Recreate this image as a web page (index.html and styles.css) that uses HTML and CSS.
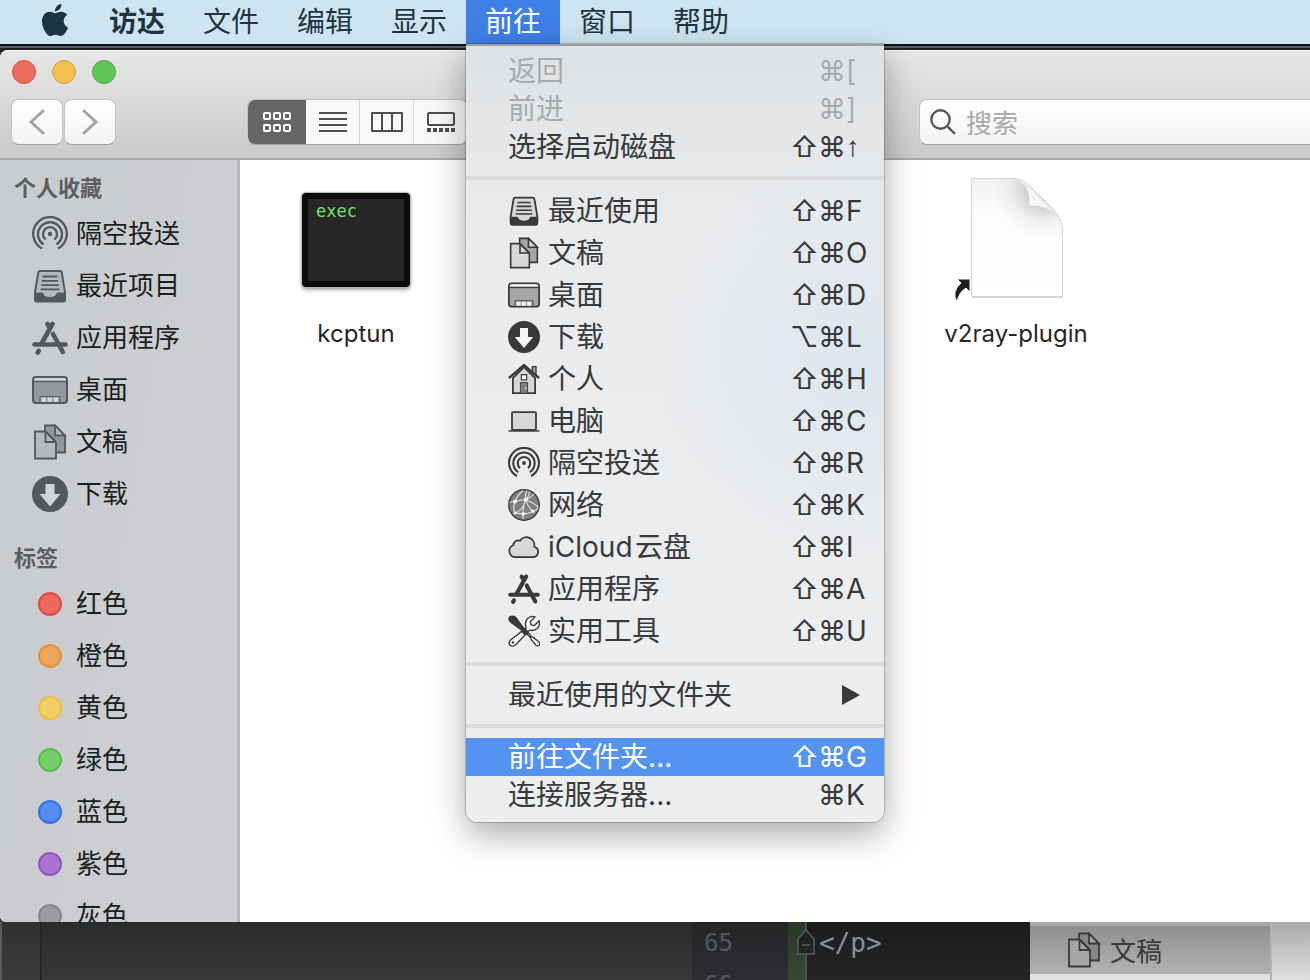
FILE: index.html
```html
<!DOCTYPE html>
<html lang="zh-CN">
<head>
<meta charset="utf-8">
<meta name="viewport" content="width=device-width, initial-scale=1">
<title>访达</title>
<link rel="stylesheet" href="styles.css">
</head>
<body>
<svg class="sprite" aria-hidden="true">
  <symbol id="i-airdrop" viewBox="0 0 36 36">
    <g fill="none" stroke="currentColor" stroke-width="2.300">
      <path d="M10 32.600A16.800 16.800 0 1 1 26 32.600"/>
      <path d="M11.600 28.400A12 12 0 1 1 24.400 28.400"/>
      <path d="M13.600 23.600A7 7 0 1 1 22.400 23.600"/>
    </g>
    <circle cx="18" cy="18" r="2.200" fill="currentColor"/>
  </symbol>
  <symbol id="i-tray" viewBox="0 0 36 36">
    <path d="M8 3h20q1.400 0 1.700 1.500L33 24v7.500q0 2-2 2H5q-2 0-2-2V24L6.300 4.500Q6.600 3 8 3z" class="pale" stroke="currentColor" stroke-width="2"/>
    <path d="M3 24.500h7q1.200 0 1.700 1.500 1 3 6.300 3t6.300-3q.5-1.500 1.700-1.500h7v7q0 2-2 2H5q-2 0-2-2z" fill="currentColor"/>
    <path d="M10.500 8.500h15M9.800 12.800h16.400M9.200 17.100h17.600M8.600 21.400h18.800" stroke="currentColor" stroke-width="1.800"/>
  </symbol>
  <symbol id="i-docs" viewBox="0 0 36 36">
    <path d="M13 1.500h10l10 10v17H13z" class="mid" stroke="currentColor" stroke-width="1.800"/>
    <path d="M23 1.500v10h10z" class="pale" stroke="currentColor" stroke-width="1.800"/>
    <path d="M3 7.500h10.500L24 18v16.500H3z" class="pale" stroke="currentColor" stroke-width="1.800"/>
    <path d="M13.500 7.500V18H24M13.500 7.500L24 18" fill="none" stroke="currentColor" stroke-width="1.800"/>
  </symbol>
  <symbol id="i-desktop" viewBox="0 0 36 36">
    <rect x="1" y="5" width="34" height="26" rx="3" class="mid" stroke="currentColor" stroke-width="2"/>
    <path d="M2 9V8q0-2 2-2h28q2 0 2 2v1z" class="light"/>
    <path d="M1 9.500h34" stroke="currentColor" stroke-width="1.600"/>
    <path d="M8 30v-5.500h20V30" fill="none" stroke="currentColor" stroke-width="1"/>
    <path d="M9.500 25.500h4.500V30H9.500zM15.500 25.500H20V30h-4.500zM21.500 25.500H26V30h-4.500z" class="light"/>
  </symbol>
  <symbol id="i-download" viewBox="0 0 36 36">
    <circle cx="18" cy="18" r="18" fill="currentColor"/>
    <path d="M13.500 8h9v10h6L18 30.500 7.500 18h6z" class="light"/>
  </symbol>
  <symbol id="i-apps" viewBox="0 0 36 36">
    <g fill="none" stroke="currentColor" stroke-width="4.600" stroke-linecap="round">
      <path d="M2.500 24.500h31"/>
      <path d="M20.500 4L9.800 23M6.700 30.800l-1 1.700"/>
      <path d="M15.300 4l1.500 2.500M21 14l9.800 18"/>
    </g>
  </symbol>
  <symbol id="i-home" viewBox="0 0 36 36">
    <path d="M27.500 4h4v10l-4-4z" class="mid" stroke="currentColor" stroke-width="1.500"/>
    <path d="M5.500 17L18 4.500 30.500 17v17h-25z" class="pale" stroke="currentColor" stroke-width="2"/>
    <path d="M1 17L18 2.500 35 17" fill="none" stroke="currentColor" stroke-width="2.800"/>
    <path d="M15 13h6v6h-6z" class="light" stroke="currentColor" stroke-width="1.300"/>
    <path d="M14 22h8v12h-8z" class="dark" stroke="currentColor" stroke-width="1"/>
    <path d="M20 27v3" stroke="#eee" stroke-width="1"/>
  </symbol>
  <symbol id="i-laptop" viewBox="0 0 36 36">
    <rect x="4.500" y="8" width="27" height="20" rx="1" class="pale" stroke="currentColor" stroke-width="2"/>
    <path d="M0 28.500h36q-.5 1.500-2 1.500H2q-1.500 0-2-1.500z" fill="currentColor"/>
  </symbol>
  <symbol id="i-network" viewBox="0 0 36 36">
    <circle cx="18" cy="18" r="17.200" class="dark" stroke="currentColor" stroke-width="1.400"/>
    <g fill="none" stroke="#e6e7e9" stroke-width="1.200">
      <path d="M2 15q3-1 6-1 6-2 12-2 5-2 9-6M8 14q-3 6 0 13l9 1q6 0 11-3 4-1 6-4M20 12q-4 8-3 22M21 2q-2 5-1 10 2 8 8 13M8 27q9-3 12-15M20 12q6 2 14 8M8 14q3-8 9-12M20 12q4-4 4-9"/>
    </g>
    <g fill="#f1f2f3"><circle cx="8" cy="14" r="2.200"/><circle cx="20" cy="12" r="2.300"/><circle cx="8" cy="27" r="1.800"/><circle cx="17" cy="28" r="2"/><circle cx="28" cy="25" r="2"/></g>
  </symbol>
  <symbol id="i-cloud" viewBox="0 0 36 36">
    <path d="M8 29.500a7 7 0 0 1-2-13.500 5.500 5.500 0 0 1 7.500-5 8.800 8.800 0 0 1 16 6.500A6.200 6.200 0 0 1 29 29.500z" class="pale" stroke="currentColor" stroke-width="2" stroke-linejoin="round"/>
  </symbol>
  <symbol id="i-tools" viewBox="0 0 36 36">
    <path d="M20.500 14.500q-2.500-6 1.500-10.500 4-3.500 8.500-2l-5.500 5.500 1 3.500 3.500 1L35 6.500q1.500 5-2 8.500-4 3.500-8.500 2L8 34q-3 2-5.500 0t0-5.500z" class="light" stroke="currentColor" stroke-width="1.500" stroke-linejoin="round"/>
    <circle cx="5.500" cy="31" r="1.400" fill="currentColor"/>
    <path d="M21 21l4 4 1.500 3 5 6q2 1.500 3.500 0t0-3.500l-6-5-3-1.500-3-4z" class="light" stroke="currentColor" stroke-width="1.500"/>
    <path d="M1 2q4-3 8 0l9 12 5 4q1 4-4 5-4-3-5-6L3 9Q-1 6 1 2z" fill="currentColor"/>
  </symbol>
</svg>

<header class="menubar">
  <button class="apple" aria-label="Apple">
    <svg viewBox="0 0 24 24" width="32" height="32"><path fill="currentColor" d="M12.152 6.896c-.948 0-2.415-1.078-3.960-1.040-2.040.027-3.910 1.183-4.961 3.014-2.117 3.675-.546 9.103 1.519 12.090 1.013 1.454 2.208 3.090 3.792 3.039 1.520-.065 2.090-.987 3.935-.987 1.831 0 2.350.987 3.960.948 1.637-.026 2.676-1.480 3.676-2.948 1.156-1.688 1.636-3.325 1.662-3.415-.039-.013-3.182-1.221-3.220-4.857-.026-3.040 2.480-4.494 2.597-4.559-1.429-2.090-3.623-2.324-4.390-2.376-2-.156-3.675 1.090-4.610 1.090zM15.530 3.830c.843-1.012 1.400-2.427 1.245-3.830-1.207.052-2.662.805-3.532 1.818-.780.896-1.454 2.338-1.273 3.714 1.338.104 2.715-.688 3.559-1.701"/></svg>
  </button>
  <button class="bar-item app-name">访达</button>
  <button class="bar-item">文件</button>
  <button class="bar-item">编辑</button>
  <button class="bar-item">显示</button>
  <div class="bar-menu">
    <button class="bar-item active" aria-expanded="true">前往</button>
    <div class="menu" role="menu">
      <button class="row" role="menuitem" disabled><span class="name">返回</span><span class="keys"><i>⌘</i><b>[</b></span></button>
      <button class="row" role="menuitem" disabled><span class="name">前进</span><span class="keys"><i>⌘</i><b>]</b></span></button>
      <button class="row" role="menuitem"><span class="name">选择启动磁盘</span><span class="keys"><i>⇧</i><i>⌘</i><b class="arrow">↑</b></span></button>
      <hr>
      <button class="row place" role="menuitem"><svg class="icon"><use href="#i-tray"/></svg><span class="name">最近使用</span><span class="keys"><i>⇧</i><i>⌘</i><b>F</b></span></button>
      <button class="row place" role="menuitem"><svg class="icon"><use href="#i-docs"/></svg><span class="name">文稿</span><span class="keys"><i>⇧</i><i>⌘</i><b>O</b></span></button>
      <button class="row place" role="menuitem"><svg class="icon"><use href="#i-desktop"/></svg><span class="name">桌面</span><span class="keys"><i>⇧</i><i>⌘</i><b>D</b></span></button>
      <button class="row place" role="menuitem"><svg class="icon"><use href="#i-download"/></svg><span class="name">下载</span><span class="keys"><i>⌥</i><i>⌘</i><b>L</b></span></button>
      <button class="row place" role="menuitem"><svg class="icon"><use href="#i-home"/></svg><span class="name">个人</span><span class="keys"><i>⇧</i><i>⌘</i><b>H</b></span></button>
      <button class="row place" role="menuitem"><svg class="icon"><use href="#i-laptop"/></svg><span class="name">电脑</span><span class="keys"><i>⇧</i><i>⌘</i><b>C</b></span></button>
      <button class="row place" role="menuitem"><svg class="icon"><use href="#i-airdrop"/></svg><span class="name">隔空投送</span><span class="keys"><i>⇧</i><i>⌘</i><b>R</b></span></button>
      <button class="row place" role="menuitem"><svg class="icon"><use href="#i-network"/></svg><span class="name">网络</span><span class="keys"><i>⇧</i><i>⌘</i><b>K</b></span></button>
      <button class="row place" role="menuitem"><svg class="icon"><use href="#i-cloud"/></svg><span class="name">iCloud&hairsp;云盘</span><span class="keys"><i>⇧</i><i>⌘</i><b>I</b></span></button>
      <button class="row place" role="menuitem"><svg class="icon"><use href="#i-apps"/></svg><span class="name">应用程序</span><span class="keys"><i>⇧</i><i>⌘</i><b>A</b></span></button>
      <button class="row place" role="menuitem"><svg class="icon"><use href="#i-tools"/></svg><span class="name">实用工具</span><span class="keys"><i>⇧</i><i>⌘</i><b>U</b></span></button>
      <hr>
      <button class="row" role="menuitem" aria-haspopup="true"><span class="name">最近使用的文件夹</span><svg class="submenu" viewBox="0 0 18 20" width="18" height="20"><path d="M0 0l18 10L0 20z" fill="currentColor"/></svg></button>
      <hr>
      <button class="row selected" role="menuitem"><span class="name">前往文件夹...</span><span class="keys"><i>⇧</i><i>⌘</i><b>G</b></span></button>
      <button class="row" role="menuitem"><span class="name">连接服务器...</span><span class="keys"><i>⌘</i><b>K</b></span></button>
    </div>
  </div>
  <button class="bar-item">窗口</button>
  <button class="bar-item">帮助</button>
</header>

<main class="finder">
  <div class="titlebar">
    <div class="lights">
      <button class="light-btn close" aria-label="关闭"></button>
      <button class="light-btn minimize" aria-label="最小化"></button>
      <button class="light-btn zoom" aria-label="缩放"></button>
    </div>
    <div class="tools">
      <div class="nav">
        <button class="nav-btn" aria-label="后退"><svg width="18" height="26" viewBox="0 0 18 26"><path d="M15 2L3 13l12 11"/></svg></button>
        <button class="nav-btn" aria-label="前进"><svg width="18" height="26" viewBox="0 0 18 26"><path d="M3 2l12 11L3 24"/></svg></button>
      </div>
      <div class="views">
        <button class="view on" aria-label="图标">
          <svg width="30" height="22" viewBox="0 0 30 22"><g fill="none" stroke="#fff" stroke-width="2"><rect x="2" y="2" width="6" height="6" rx="1"/><rect x="12" y="2" width="6" height="6" rx="1"/><rect x="22" y="2" width="6" height="6" rx="1"/><rect x="2" y="14" width="6" height="6" rx="1"/><rect x="12" y="14" width="6" height="6" rx="1"/><rect x="22" y="14" width="6" height="6" rx="1"/></g></svg>
        </button>
        <button class="view" aria-label="列表">
          <svg width="28" height="22" viewBox="0 0 28 22"><path d="M0 2h28M0 8h28M0 14h28M0 20h28" stroke="#4e4e4e" stroke-width="2"/></svg>
        </button>
        <button class="view" aria-label="分栏">
          <svg width="32" height="22" viewBox="0 0 32 22"><path d="M1 2h30v18H1zM11 2v18M21 2v18" fill="none" stroke="#4e4e4e" stroke-width="2" stroke-linejoin="round"/></svg>
        </button>
        <button class="view" aria-label="画廊">
          <svg width="28" height="22" viewBox="0 0 28 22"><rect x="1" y="2" width="26" height="12" rx="1" fill="none" stroke="#4e4e4e" stroke-width="2"/><path d="M0 19h4M6 19h4M12 19h4M18 19h4M24 19h4" stroke="#4e4e4e" stroke-width="4"/></svg>
        </button>
      </div>
      <label class="search">
        <svg width="26" height="26" viewBox="0 0 26 26"><circle cx="10.500" cy="10.500" r="9.200"/><path d="M17 17l8 8"/></svg>
        <input type="search" placeholder="搜索" aria-label="搜索">
      </label>
    </div>
  </div>

  <div class="body">
    <nav class="sidebar">
      <h2>个人收藏</h2>
      <a href="#"><svg class="icon"><use href="#i-airdrop"/></svg>隔空投送</a>
      <a href="#"><svg class="icon"><use href="#i-tray"/></svg>最近项目</a>
      <a href="#"><svg class="icon"><use href="#i-apps"/></svg>应用程序</a>
      <a href="#"><svg class="icon"><use href="#i-desktop"/></svg>桌面</a>
      <a href="#"><svg class="icon"><use href="#i-docs"/></svg>文稿</a>
      <a href="#"><svg class="icon"><use href="#i-download"/></svg>下载</a>
      <h2 class="tags">标签</h2>
      <a href="#"><span class="dot red"></span>红色</a>
      <a href="#"><span class="dot orange"></span>橙色</a>
      <a href="#"><span class="dot yellow"></span>黄色</a>
      <a href="#"><span class="dot green"></span>绿色</a>
      <a href="#"><span class="dot blue"></span>蓝色</a>
      <a href="#"><span class="dot purple"></span>紫色</a>
      <a href="#"><span class="dot gray"></span>灰色</a>
    </nav>
    <section class="files">
      <figure class="file">
        <div class="thumb"><div class="exec">exec</div></div>
        <figcaption>kcptun</figcaption>
      </figure>
      <figure class="file fourth">
        <div class="thumb">
          <svg width="128" height="128" viewBox="0 0 128 128">
            <defs>
              <linearGradient id="page" x1="0" y1="0" x2="0" y2="1"><stop offset="0" stop-color="#f3f3f3"/><stop offset=".35" stop-color="#fdfdfd"/><stop offset="1" stop-color="#fff"/></linearGradient>
              <radialGradient id="fold" gradientUnits="userSpaceOnUse" cx="92" cy="14" r="52"><stop offset="0" stop-color="#000" stop-opacity=".28"/><stop offset=".35" stop-color="#000" stop-opacity=".15"/><stop offset=".65" stop-color="#000" stop-opacity=".04"/><stop offset="1" stop-color="#000" stop-opacity="0"/></radialGradient>
              <linearGradient id="curl" x1="0" y1="1" x2="1" y2="0"><stop offset="0" stop-color="#fff"/><stop offset=".5" stop-color="#f4f4f4"/><stop offset="1" stop-color="#e6e6e6"/></linearGradient>
            </defs>
            <path d="M20 4h41q9 0 17 8l22 22q11 11 11 22v66H20z" fill="#000" opacity=".16"/>
            <path d="M19.500 2.500h41q10 0 18 8l22 22q10 10 10 22v66h-91z" fill="url(#page)" stroke="#d5d5d5"/>
            <path d="M20 3h41q9 0 17 8l22 22q10 10 10 22v65H20z" fill="url(#fold)"/>
            <path d="M66 3.500q13 8 11.500 26 14-1 25 7.500L78 11q-6-6-12-7.500z" fill="url(#curl)"/>
            <path d="M5 103h13v13l-4-4q-7 4-9 14-6-10 4-19z" fill="#1b1d20" stroke="#fff" stroke-width="1"/>
          </svg>
        </div>
        <figcaption>v2ray-plugin</figcaption>
      </figure>
    </section>
  </div>
</main>

<footer class="behind">
  <div class="edge"></div>
  <div class="panel"></div>
  <div class="lines"><span>65</span><span>66</span></div>
  <div class="changed"></div>
  <div class="code">
    <svg width="18" height="26" viewBox="0 0 18 26"><path d="M9 1l8 9v15H1V10zM5 16h8" fill="#222" stroke="#56585a" stroke-width="1.600"/></svg>
    <code>&lt;/p&gt;</code>
  </div>
  <div class="other">
    <a href="#"><svg class="icon"><use href="#i-docs"/></svg>文稿</a>
  </div>
  <div class="other-body"></div>
</footer>
</body>
</html>
```
FILE: styles.css
```css
* { box-sizing: border-box; }

html { height: 100%; }

body {
  margin: 0;
  height: 100%;
  display: flex;
  flex-direction: column;
  overflow: hidden;
  font-family: Inter, "Noto Sans CJK SC", sans-serif;
  background: linear-gradient(#0c1018 0 46px, #5b5e60 46px 48px, #222 48px 52px, #303133 52px);
}

button {
  margin: 0;
  padding: 0;
  border: 0;
  background: none;
  color: inherit;
  font: inherit;
}

a { color: inherit; text-decoration: none; }

.sprite { display: none; }

.icon { width: 36px; height: 36px; flex: none; }
.pale { fill: var(--pale); }
.mid { fill: var(--mid); }
.dark { fill: var(--dark); }
.light { fill: var(--light); }

/* Menu bar */
.menubar {
  flex: none;
  display: flex;
  height: 44px;
  padding-left: 39px;
  background: #cee5f1;
  color: #1f3441;
  font-size: 28px;
  line-height: 44px;
  position: relative;
  z-index: 2;
}

.apple { width: 51px; display: flex; align-items: center; padding-bottom: 4px; }
.bar-item { height: 44px; padding: 0 19px; white-space: nowrap; }
.app-name { font-weight: 700; }
.bar-menu { position: relative; }
.active { background: #3e7fe8; color: #fff; }

.menu {
  position: absolute;
  top: 44px;
  left: 0;
  width: 418px;
  padding: 6px 0 8px;
  border-top: 2px solid #999ca0;
  border-radius: 0 0 12px 12px;
  background:
    radial-gradient(circle at 400px 310px, #dde7ef 0, rgba(222, 231, 238, 0) 210px),
    linear-gradient(#dfe2e4, #eaebed 180px, #edeef0);
  box-shadow: 0 0 1px 1px rgba(0, 0, 0, .2), 0 12px 34px rgba(0, 0, 0, .34);
  color: #37393b;
}

.menu hr {
  height: 4px;
  margin: 10px 0;
  border: 0;
  background: #d9dbdd;
}

.row {
  display: flex;
  align-items: center;
  width: 100%;
  height: 38px;
  padding: 0 16px 0 42px;
  line-height: 36px;
  text-align: left;
}

.row .icon { width: 32px; height: 32px; margin-right: 8px; }
.row .name { flex: 1; white-space: nowrap; }
.row:disabled { color: #a8abad; }
.place {
  height: 42px;
  line-height: 40px;
  --pale: #d5d7d9;
  --mid: #a5a6a8;
  --dark: #7d7f81;
  --light: #f4f5f6;
}
.selected { background: #5493f0; color: #fff; }
.submenu { margin-right: 8px; }

.keys { display: flex; }
.keys i { width: 28px; font-style: normal; text-align: center; }
.keys b { width: 22px; font-weight: 400; }
.keys .arrow { font-family: "Liberation Sans", sans-serif; }

/* Finder window */
.finder {
  flex: 1;
  min-height: 0;
  margin-top: 6px;
  display: flex;
  flex-direction: column;
  border-radius: 8px 0 0 6px;
  overflow: hidden;
  background: #fff;
}

.titlebar {
  flex: none;
  height: 110px;
  padding: 9px 0 0 12px;
  border-top: 1px solid #f5f5f5;
  border-bottom: 2px solid #a9a9a9;
  background: linear-gradient(#e7e7e7, #cacaca);
}

.lights { display: flex; gap: 16px; }
.light-btn { width: 24px; height: 24px; border-radius: 50%; }
.close { background: #ec6a5e; border: 1px solid #d5534a; }
.minimize { background: #f5bf4f; border: 1px solid #d8a03c; }
.zoom { background: #61c554; border: 1px solid #4ea73e; }

.tools { display: flex; align-items: center; margin: 15px 0 0 -1px; }
.nav { display: flex; gap: 1px; width: 236px; }
.nav-btn,
.views,
.search {
  height: 46px;
  background: linear-gradient(#fff, #f3f3f3);
  border: 1px solid #c4c4c4;
  border-bottom-color: #a4a4a4;
}
.nav-btn {
  width: 52px;
  border-radius: 8px;
  display: flex;
  align-items: center;
  justify-content: center;
}
.nav-btn svg { fill: none; stroke: #a3a3a3; stroke-width: 3; stroke-linecap: round; }

.views { display: flex; border-radius: 8px; overflow: hidden; background: #f8f8f8; }
.view {
  width: 54px;
  display: flex;
  align-items: center;
  justify-content: center;
}
.view + .view { border-left: 1px solid #d6d6d6; }
.view.on { width: 58px; background: #666; }
.view.on + .view { width: 53px; border-left: 0; }

.search {
  flex: 1;
  margin-left: 451px;
  display: flex;
  align-items: center;
  gap: 10px;
  padding-left: 10px;
  border-right: 0;
  border-radius: 8px 0 0 8px;
}
.search svg { flex: none; fill: none; stroke: #565656; stroke-width: 2.400; }
.search input {
  flex: 1;
  min-width: 0;
  padding: 0;
  border: 0;
  outline: 0;
  background: none;
  font: 26px/40px "Noto Sans CJK SC", sans-serif;
}
.search input::placeholder { color: #a9a9a9; opacity: 1; }

.body { flex: 1; min-height: 0; display: flex; }

.sidebar {
  flex: none;
  width: 240px;
  padding-top: 7px;
  border-right: 3px solid #b2b5b9;
  overflow: hidden;
  background: linear-gradient(100deg, #c9cccf, #cdced2);
  color: #1b1e20;
  --pale: #b6babd;
  --mid: #94989a;
  --dark: #7d7f81;
  --light: #d2d5d8;
}
.sidebar h2 {
  height: 42px;
  margin: 0;
  padding-left: 14px;
  color: #5a5e61;
  font-size: 22px;
  line-height: 42px;
  font-weight: 700;
}
.sidebar .tags { margin-top: 16px; }
.sidebar a {
  display: flex;
  align-items: center;
  gap: 8px;
  height: 52px;
  padding: 0 0 2px 32px;
  font-size: 26px;
  line-height: 50px;
}
.sidebar .icon { color: #54585b; }

.dot { width: 24px; height: 24px; margin: 0 6px; border: 2px solid; border-radius: 50%; }
.red { background: #ea6a5f; border-color: #e4493c; }
.orange { background: #eda55d; border-color: #e8923c; }
.yellow { background: #f2cf62; border-color: #ecc13c; }
.green { background: #78cd6c; border-color: #58bd4a; }
.blue { background: #568cf1; border-color: #2f72ec; }
.purple { background: #a975ce; border-color: #9553c3; }
.gray { background: #9b9ba0; border-color: #85858a; }

.files {
  flex: 1;
  min-width: 0;
  display: grid;
  grid-template-columns: repeat(auto-fill, 220px);
  align-content: start;
  padding: 16px 0 0 6px;
}
.file { margin: 0; display: flex; flex-direction: column; align-items: center; }
.fourth { grid-column: 4; }
.thumb { width: 128px; height: 128px; display: flex; align-items: center; justify-content: center; }
.exec {
  width: 108px;
  height: 94px;
  padding: 0 0 0 8px;
  border: 6px solid #0b0b0b;
  border-radius: 4px;
  background: #272727;
  box-shadow: 0 0 1px 1px #a9bcc4, 0 2px 4px rgba(0, 0, 0, .5);
  color: #72e26c;
  font: 17px/24px "DejaVu Sans Mono", monospace;
}
.file figcaption {
  margin-top: 14px;
  color: #262626;
  font-size: 24px;
  line-height: 32px;
}

/* Windows showing below the Finder window */
.behind {
  flex: none;
  display: flex;
  height: 58px;
  overflow: hidden;
  font: 26px/42px "DejaVu Sans Mono", monospace;
}
.edge { width: 42px; background: linear-gradient(#303133, #3a3b3d); border-left: 2px solid #5b5c5d; border-right: 2px solid #252628; }
.panel { flex: 1; background: linear-gradient(#2a2b2d, #38393b); }
.lines {
  width: 96px;
  padding-left: 12px;
  display: flex;
  flex-direction: column;
  background: linear-gradient(#232527, #2c2e31);
  color: #55585b;
  font-size: 24px;
}
.changed { width: 19px; background: linear-gradient(#2a3828, #384834); border-right: 2px solid #4d4f4f; }
.code {
  width: 223px;
  display: flex;
  align-items: flex-start;
  background: linear-gradient(#1c1c1c, #252525);
  color: #8490a0;
}
.code code { font: inherit; }
.code svg { margin: 7px 4px 0 -10px; flex: none; }
.other {
  width: 242px;
  padding: 4px 0;
  border-right: 2px solid #b4b4b4;
  background: linear-gradient(#a8a8a8, #e2e2e2);
}
.other a {
  display: flex;
  align-items: center;
  gap: 8px;
  height: 48px;
  padding-left: 36px;
  background: linear-gradient(#8f8f8f, #b2b2b2);
  color: #3b3b3b;
  font: 26px/48px "Noto Sans CJK SC", sans-serif;
  --pale: #a5a5a5;
  --mid: #858585;
}
.other-body { width: 38px; background: linear-gradient(#a9a9a9, #e0e0e0); }
```
